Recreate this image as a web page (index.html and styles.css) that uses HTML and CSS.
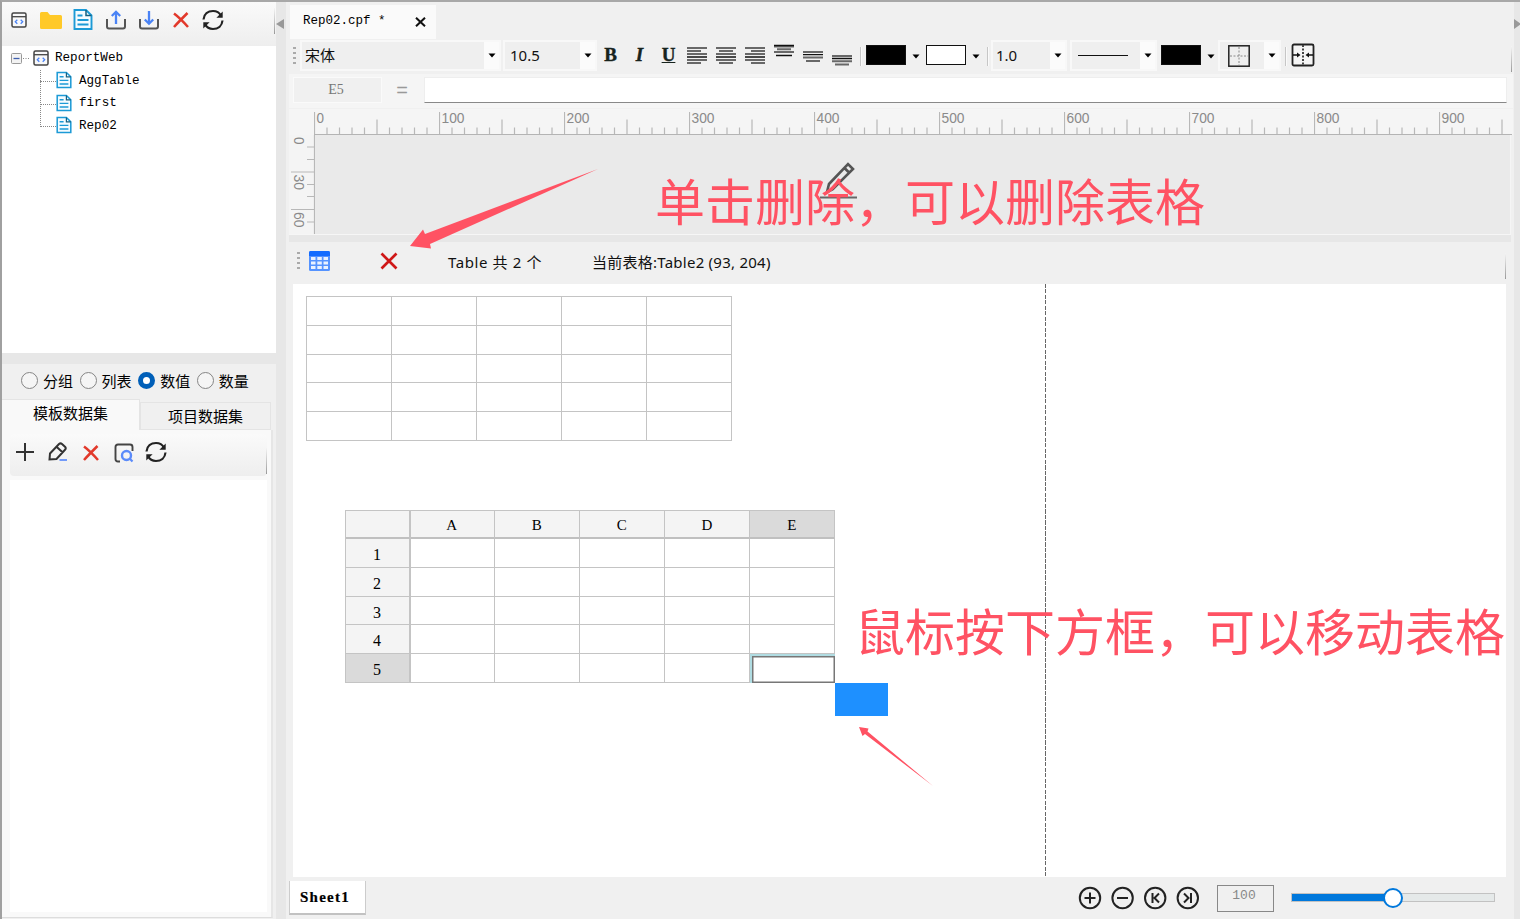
FILE: index.html
```html
<!DOCTYPE html>
<html lang="zh-CN">
<head>
<meta charset="utf-8">
<title>Report Designer</title>
<link rel="stylesheet" href="styles.css">
</head>
<body>
<svg class="defs" width="0" height="0">
  <defs>
    <symbol id="doc" viewBox="0 0 20 22"><path d="M1.5 1.5h11.5l5.5 5.500v13.500h-17z" fill="#f4fbff" stroke="#1c9ad6" stroke-width="1.900"/><path d="M13 1.500v5.500h5.500" fill="none" stroke="#17607f" stroke-width="1.500"/><path d="M4.500 7h5M4.500 11.500h11M4.500 16h11" stroke="#1c9ad6" stroke-width="1.800"/></symbol>
    <symbol id="web" viewBox="0 0 16 16"><rect x="1" y="1" width="14" height="14" rx="1.500" fill="#f8f8f8" stroke="#444" stroke-width="1.500"/><path d="M1 4.700h14" stroke="#444" stroke-width="1.300"/><path d="M6.300 7.700L4.300 9.700l2 2M9.700 7.700l2 2-2 2" fill="none" stroke="#4a83f5" stroke-width="1.300"/></symbol>
    <symbol id="cross" viewBox="0 0 18 18"><path d="M2 2.500C6 5.500 12 11.500 16 16M15.500 2C11.500 6 6 11.500 2 16" fill="none" stroke="#e2392b" stroke-width="2.500"/></symbol>
    <symbol id="refresh" viewBox="0 0 22 22"><path d="M1.500 10.500C2 5 6 2 11 2c3.500 0 6.500 1.800 8 4.700M20.500 11.500C20 17 16 20 11 20c-3.500 0-6.500-1.800-8-4.700" fill="none" stroke="#222" stroke-width="2.200"/><path d="M20.700 2.500v6.300h-6.300zM1.300 19.500v-6.300h6.300z" fill="#222"/></symbol>
    <symbol id="caret" viewBox="0 0 8 5"><path d="M.5 .5h7L4 4.500z" fill="#000"/></symbol>
    <pattern id="hticks" x="0" width="125" height="26" patternUnits="userSpaceOnUse"><path d="M.5 3v22.500M63 10.500v15M13 18.500v7M25.500 18.500v7M38 18.500v7M50.500 18.500v7M75.500 18.500v7M88 18.500v7M100.500 18.500v7M113 18.500v7" stroke="#b8b8b8" stroke-width="1.200"/></pattern>
  </defs>
</svg>
<div class="app">
  <aside class="sidebar">
    <div class="toolbar side-tools">
      <svg class="i-web" width="16" height="16"><use href="#web"/></svg>
      <svg class="i-folder" width="22" height="18" viewBox="0 0 22 18"><path d="M0 1.500Q0 0 1.500 0h6l2.500 3h10.500Q22 3 22 4.500v11q0 1.500-1.500 1.500h-19Q0 17 0 15.500z" fill="#ffc928"/></svg>
      <svg class="i-doc" width="20" height="23"><use href="#doc"/></svg>
      <svg class="i-up" width="20" height="20" viewBox="0 0 20 20"><path d="M1 9v7.500q0 2 2 2h14q2 0 2-2V9" fill="none" stroke="#555" stroke-width="2"/><path d="M10 14V2M5.800 6L10 1.800 14.200 6" fill="none" stroke="#4a83f5" stroke-width="2.300"/></svg>
      <svg class="i-down" width="20" height="20" viewBox="0 0 20 20"><path d="M1 9v7.500q0 2 2 2h14q2 0 2-2V9" fill="none" stroke="#555" stroke-width="2"/><path d="M10 1v12M5.800 9.500L10 13.700l4.200-4.200" fill="none" stroke="#4a83f5" stroke-width="2.300"/></svg>
      <svg class="i-x" width="18" height="18"><use href="#cross"/></svg>
      <svg class="i-ref" width="22" height="22"><use href="#refresh"/></svg>
      <span class="tool-end"></span>
    </div>
    <div class="tree">
      <div class="node root"><svg class="twig" width="20" height="12" viewBox="0 0 20 12"><rect x=".5" y=".5" width="10" height="10" rx="1" fill="#f3f3f3" stroke="#999"/><path d="M2.500 5.500h6" stroke="#3f5fae" stroke-width="1.300"/><path d="M12 5.500h7" stroke="#888" stroke-dasharray="1 1.500"/></svg><svg width="16" height="16"><use href="#web"/></svg><span>ReportWeb</span></div>
      <div class="children">
        <div class="node"><i></i><svg width="16" height="18"><use href="#doc"/></svg><span>AggTable</span></div>
        <div class="node"><i></i><svg width="16" height="18"><use href="#doc"/></svg><span>first</span></div>
        <div class="node"><i></i><svg width="16" height="18"><use href="#doc"/></svg><span>Rep02</span></div>
      </div>
    </div>
    <div class="hsplit"></div>
    <div class="radios">
      <label><b></b>分组</label><label><b></b>列表</label><label><b class="on"></b>数值</label><label><b></b>数量</label>
    </div>
    <div class="tabs"><div class="tab on">模板数据集</div><div class="tab">项目数据集</div></div>
    <div class="panel">
      <div class="panel-tools">
        <svg class="p-add" width="18" height="18" viewBox="0 0 18 18"><path d="M9 0v18M0 9h18" stroke="#333" stroke-width="2"/></svg>
        <svg class="p-edit" width="20" height="20" viewBox="0 0 20 20"><path d="M1.500 17.500l.5-6L11 2q1.500-1.300 3 0l3 2.800q1.500 1.500 0 3L8.500 17z M8.500 4.700l6 5.600" fill="none" stroke="#333" stroke-width="2"/><path d="M11.500 18h7.500" stroke="#6490fa" stroke-width="1.800"/></svg>
        <svg class="p-x" width="18" height="18"><use href="#cross"/></svg>
        <svg class="p-view" width="20" height="20" viewBox="0 0 20 20"><path d="M6 18.500H4q-2.500 0-2.500-2.500V4Q1.500 1.500 4 1.500h12q2.500 0 2.500 2.500v4" fill="none" stroke="#444" stroke-width="1.900"/><circle cx="12.500" cy="12.500" r="4.500" fill="none" stroke="#5b8bfa" stroke-width="2.400"/><path d="M15.800 15.800l2.700 2.700" stroke="#5b8bfa" stroke-width="2.200"/></svg>
        <svg class="p-ref" width="22" height="22"><use href="#refresh"/></svg>
        <span class="tool-end"></span>
      </div>
      <div class="panel-body"></div>
    </div>
  </aside>
  <div class="vsplit"><svg width="8" height="10" viewBox="0 0 8 10"><path d="M8 0v10L0 5z" fill="#999"/></svg></div>
  <main class="main">
    <div class="filetabs"><div class="filetab"><span>Rep02.cpf *</span><svg width="11" height="10" viewBox="0 0 11 10"><path d="M1 .7l9 8.600M10 .7L1 9.300" stroke="#111" stroke-width="2"/></svg></div></div>
    <div class="format">
      <span class="grip"></span>
      <div class="combo font"><span>宋体</span><em><svg width="8" height="5"><use href="#caret"/></svg></em></div>
      <div class="combo size"><span>10.5</span><em><svg width="8" height="5"><use href="#caret"/></svg></em></div>
      <span class="biu">B</span><span class="biu it">I</span><span class="biu un">U</span>
      <svg class="aligns" width="166" height="26" viewBox="0 0 166 26">
        <g stroke="#686868" stroke-width="2">
          <path d="M1 5h20M1 8h14M1 11h20M1 17h20M1 20h14M30 5h20M33 8h14M30 11h20M30 17h20M33 20h14M59 5h20M65 8h14M59 11h20M59 17h20M65 20h14"/>
          <path d="M88 3.500h20M91 6.200h14M88 9h20M117 9h20M117 14.500h20M120 18h14M146 13h20M146 18.200h20M149 21.500h14"/>
        </g>
        <path d="M1 14h20M30 14h20M59 14h20M88 2.500h20M90 12.500h16M117 11.700h20M146 15.500h20" stroke="#111" stroke-width="1.300"/>
      </svg>
      <span class="sep s1"></span>
      <span class="swatch"></span><svg class="drop" width="8" height="5"><use href="#caret"/></svg>
      <span class="swatch white"></span><svg class="drop" width="8" height="5"><use href="#caret"/></svg>
      <span class="sep s2"></span>
      <div class="combo thick"><span>1.0</span><em><svg width="8" height="5"><use href="#caret"/></svg></em></div>
      <div class="combo line"><span><u></u></span><em><svg width="8" height="5"><use href="#caret"/></svg></em></div>
      <span class="swatch third"></span><svg class="drop" width="8" height="5"><use href="#caret"/></svg>
      <div class="combo border"><span><svg width="22" height="22" viewBox="0 0 22 22"><rect x=".8" y=".8" width="20.400" height="20.400" fill="none" stroke="#222" stroke-width="1.500"/><path d="M11 2v18M2 11h18" stroke="#888" stroke-dasharray="2 1.500"/></svg></span><em><svg width="8" height="5"><use href="#caret"/></svg></em></div>
      <span class="sep s3"></span>
      <svg class="merge" width="24" height="24" viewBox="0 0 24 24"><rect x="1.500" y="1.500" width="21" height="21" rx="1.500" fill="#f5f5f5" stroke="#222" stroke-width="1.800"/><path d="M12 2v20" stroke="#444" stroke-width="2" stroke-dasharray="2 1.500"/><path d="M2 12h5M17 12h5" stroke="#111" stroke-width="1.700"/><path d="M6 9.500l3.500 2.500L6 14.500zM18 9.500L14.500 12l3.500 2.500z" fill="#111"/></svg>
      <span class="tool-end"></span>
    </div>
    <div class="formula"><div class="cellname">E5</div><span class="eq">=</span><div class="input"></div></div>
    <div class="hruler">
      <svg width="1198" height="26"><rect width="1198" height="26" fill="url(#hticks)"/><path d="M0 25.500h1198" stroke="#b4b4b4"/>
        <g class="num"><text x="2.500" y="13.500" textLength="7.500" lengthAdjust="spacingAndGlyphs">0</text><text x="127.500" y="13.500" textLength="23" lengthAdjust="spacingAndGlyphs">100</text><text x="252.500" y="13.500" textLength="23" lengthAdjust="spacingAndGlyphs">200</text><text x="377.500" y="13.500" textLength="23" lengthAdjust="spacingAndGlyphs">300</text><text x="502.500" y="13.500" textLength="23" lengthAdjust="spacingAndGlyphs">400</text><text x="627.500" y="13.500" textLength="23" lengthAdjust="spacingAndGlyphs">500</text><text x="752.500" y="13.500" textLength="23" lengthAdjust="spacingAndGlyphs">600</text><text x="877.500" y="13.500" textLength="23" lengthAdjust="spacingAndGlyphs">700</text><text x="1002.500" y="13.500" textLength="23" lengthAdjust="spacingAndGlyphs">800</text><text x="1127.500" y="13.500" textLength="23" lengthAdjust="spacingAndGlyphs">900</text></g>
      </svg>
    </div>
    <div class="header-zone">
      <svg class="vruler" width="26" height="99"><path d="M25.500 0v99M18 12h7M18 24.500h7M2 37h23M18 49.500h7M18 61.500h7M2 74.500h23M18 87h7" stroke="#b8b8b8" stroke-width="1.200" fill="none"/>
        <g class="num"><text transform="translate(5 2) rotate(90)" textLength="7.500" lengthAdjust="spacingAndGlyphs">0</text><text transform="translate(5 39.500) rotate(90)" textLength="15.500" lengthAdjust="spacingAndGlyphs">30</text><text transform="translate(5 77) rotate(90)" textLength="15.500" lengthAdjust="spacingAndGlyphs">60</text></g></svg>
      <div class="blank"></div>
    </div>
    <div class="msplit"></div>
    <div class="tabletools">
      <span class="grip"></span>
      <svg class="t-grid" width="21" height="20" viewBox="0 0 21 20"><rect width="21" height="20" rx="1.500" fill="#5593ff"/><path d="M0 1.500Q0 0 1.500 0h18Q21 0 21 1.500V5H0z" fill="#146cff"/><path d="M2 6h4.500v3H2zM8.300 6h4.500v3H8.300zM14.500 6H19v3h-4.500zM2 10.500h4.500v3H2zM8.300 10.500h4.500v3H8.300zM14.500 10.500H19v3h-4.500zM2 15h4.500v3H2zM8.300 15h4.500v3H8.300zM14.500 15H19v3h-4.500z" fill="#eaf2ff"/></svg>
      <svg class="t-x" width="18" height="18" viewBox="0 0 18 18"><path d="M1.500 1.500l15 15M16.500 1.500l-15 15" stroke="#cf1717" stroke-width="2.700"/></svg>
      <span class="count">Table 共 2 个</span><span class="current">当前表格:Table2 (93, 204)</span>
      <span class="tool-end"></span>
    </div>
    <div class="canvas">
      <div class="pageline"></div>
      <div class="grid plain">
        <i></i><i></i><i></i><i></i><i></i><i></i><i></i><i></i><i></i><i></i><i></i><i></i><i></i><i></i><i></i><i></i><i></i><i></i><i></i><i></i><i></i><i></i><i></i><i></i><i></i>
      </div>
      <div class="grid sheet">
        <b></b><b>A</b><b>B</b><b>C</b><b>D</b><b class="sel">E</b>
        <b>1</b><i></i><i></i><i></i><i></i><i></i>
        <b>2</b><i></i><i></i><i></i><i></i><i></i>
        <b>3</b><i></i><i></i><i></i><i></i><i></i>
        <b>4</b><i></i><i></i><i></i><i></i><i></i>
        <b class="sel">5</b><i></i><i></i><i></i><i></i><i class="active"></i>
      </div>
      <div class="handle"></div>
    </div>
    <div class="footer">
      <div class="sheettab">Sheet1</div>
      <div class="zoom">
        <svg width="122" height="24" viewBox="0 0 122 24" fill="none" stroke="#222" stroke-width="2"><circle cx="12" cy="12" r="10.200"/><path d="M12 6.500v11M6.500 12h11"/><circle cx="44.600" cy="12" r="10.200"/><path d="M39 12h11"/><circle cx="77.200" cy="12" r="10.200"/><path d="M74.500 7v10M81 7.500l-4.500 4.500 4.500 4.500"/><circle cx="109.800" cy="12" r="10.200"/><path d="M113 7v10M106 7.500l4.500 4.500-4.500 4.500"/></svg>
        <div class="percent">100</div>
        <div class="slider"><div class="fill"></div><div class="knob"></div></div>
      </div>
    </div>
  </main>
  <div class="rightsplit"><svg width="6" height="10" viewBox="0 0 6 10"><path d="M0 0v10l7-5z" fill="#999"/></svg></div>
  <svg class="pencil" width="40" height="40" viewBox="0 0 40 40"><path d="M8 31l2-8L29 3l5 5-20 20zM25.500 7l5 5M8 31l6-3" fill="none" stroke="#555" stroke-width="2.600"/><path d="M1 36.500h37" stroke="#666" stroke-width="2"/></svg>
  <div class="note n1">单击删除，可以删除表格</div>
  <div class="note n2">鼠标按下方框，可以移动表格</div>
  <svg class="arrow a1" width="190" height="82" viewBox="0 0 190 82"><path d="M0 78L13 61.500l2 4.500L188 1 20 76l1 4.500z" fill="#ff5263"/></svg>
  <svg class="arrow a2" width="75" height="61" viewBox="0 0 75 61"><path d="M0 0l9.500 1.500-1 3L74 59 6 7 3.500 9z" fill="#ff5263"/></svg>
</div>
</body>
</html>
```

FILE: styles.css
```css
* { box-sizing: border-box; }
body { margin: 0; font-family: "Noto Sans", "Noto Sans CJK SC", sans-serif; font-size: 15px; color: #111; overflow: hidden; }
svg { display: block; flex: none; }
i, b, em { font-style: normal; font-weight: normal; }
.defs { position: absolute; }
.app { position: relative; width: 1520px; height: 919px; display: flex; background: #f0f0f0; border-top: 2px solid #a8a8a8; border-left: 2px solid #a0a0a0; }
.tool-end { width: 1px; height: 26px; background: linear-gradient(#f4f4f4, #999); margin-left: auto; }

/* sidebar */
.sidebar { width: 274px; display: flex; flex-direction: column; flex: none; }
.side-tools { height: 44px; display: flex; align-items: flex-start; background: linear-gradient(#fafafa, #eee); padding: 0 1px 0 9px; }
.side-tools .i-web { margin-top: 10px; }
.side-tools .i-folder { margin: 10px 0 0 13px; }
.side-tools .i-doc { margin: 6px 0 0 11px; }
.side-tools .i-up { margin: 8px 0 0 13px; }
.side-tools .i-down { margin: 8px 0 0 13px; }
.side-tools .i-x { margin: 9px 0 0 13px; }
.side-tools .i-ref { margin: 7px 0 0 12px; }
.side-tools .tool-end { margin-top: 6px; }
.tree { height: 307px; background: #fff; padding: 1px 0 0 9px; font: 12.6px/22px "Liberation Mono", monospace; color: #000; }
.node { display: flex; align-items: center; height: 22.5px; }
.root span { margin-left: 6px; }
.root .twig { margin-right: 2px; margin-top: 2px; }
.root svg + svg { margin-top: -1px; }
.children { margin-left: 29px; position: relative; }
.children::before { content: ""; position: absolute; left: 0; top: 0; height: 57px; border-left: 1px dotted #888; }
.children i { width: 16px; border-top: 1px dotted #888; margin-top: 2px; }
.children svg { margin-top: -1px; }
.children span { margin-left: 7px; }
.hsplit { height: 11px; background: #e7e7e7; }
.radios { height: 35px; display: flex; align-items: center; padding: 0 0 2px 19px; gap: 7px; }
.radios label { display: flex; align-items: center; height: 20px; width: 51.600px; white-space: nowrap; gap: 5px; color: #000; }
.radios b { width: 17px; height: 17px; border: 1.500px solid #858585; border-radius: 50%; background: #f5f5f5; flex: none; }
.radios .on { background: #fff; border: 5px solid #005fb8; }
.tabs { height: 31px; display: flex; align-items: flex-end; color: #000; }
.tab { height: 28px; width: 131px; border: 1px solid #e4e4e4; text-align: center; line-height: 27px; }
.tab.on { height: 31px; width: 138px; background: #f9f9f9; border-bottom: 0; border-left: 0; line-height: 27px; }
.panel { width: 271px; height: 488px; background: #f9f9f9; border-right: 2px solid #e6e6e6; border-bottom: 1px solid #ddd; padding: 4px 4px 6px 8px; }
.panel-tools { height: 42px; display: flex; align-items: flex-start; background: linear-gradient(#fafafa, #eee); border-radius: 4px; padding-left: 6px; }
.p-add { margin-top: 9px; }
.p-edit { margin: 8px 0 0 14px; }
.p-x { margin: 10px 0 0 14px; }
.p-view { margin: 9px 0 0 14px; }
.p-ref { margin: 7px 0 0 11px; }
.panel-tools .tool-end { margin-top: 14px; }
.panel-body { height: 432px; background: #fff; margin-top: 4px; }
.vsplit { width: 10px; background: #e7e7e7; flex: none; padding-top: 17px; }

/* editor */
.main { width: 1227px; flex: none; padding-left: 3px; display: flex; flex-direction: column; }
.filetabs { height: 37px; padding: 3px 0 0 1px; }
.filetab { width: 146px; height: 34px; background: #fafafa; display: flex; align-items: center; padding-left: 13px; font: 12.5px "Liberation Mono", monospace; color: #000; }
.filetab span { line-height: 32px; height: 34px; width: 112px; }
.format { height: 34px; display: flex; align-items: center; padding-left: 4px; }
.grip { width: 3px; height: 18px; background: repeating-linear-gradient(#aaa 0 2px, transparent 2px 5px); }
.combo { height: 31px; border: 2px solid #f8f8f8; display: flex; background: #efefef; line-height: 27px; margin-bottom: 1px; }
.combo span { flex: 1; padding-left: 3px; }
.combo em { width: 15px; background: #fbfbfb; display: flex; align-items: center; justify-content: center; }
.combo.font { width: 201px; margin-left: 4px; }
.combo.size { width: 94px; margin-left: 2px; }
.combo.size span { padding-left: 5px; line-height: 26px; }
.biu { width: 29px; margin: 0 0 2px; text-align: center; font: bold 19px/22px "Liberation Serif", serif; color: #17231d; -webkit-text-stroke: .4px #17231d; position: relative; left: -1px; }
.it { font-style: italic; }
.un { text-decoration: underline; }
.aligns { margin-left: 2px; margin-bottom: 1px; }
.sep { width: 2px; height: 19px; background: #c6c6c6; border-right: 1px solid #fafafa; }
.s1 { margin: 0 4px 0 8px; }
.swatch { width: 40px; height: 20px; background: #000; border: 1.500px solid #111; margin-bottom: 2px; }
.swatch.white { background: #fff; }
.drop { margin: 0 6px 0 6px; }
.s2 { margin: 0 2px 0 1px; }
.combo.thick { width: 76px; }
.combo.line { width: 87px; margin-left: 3px; }
.combo.line span { padding: 13px 0 0 6px; }
.combo u { display: block; width: 50px; border-top: 1px solid #111; }
.third { margin-left: 4px; }
.combo.border { width: 63px; margin-left: -3px; }
.combo.border span { padding: 3px 0 0 8px; }
.s3 { margin: 0 4px; }
.merge { margin-bottom: 2px; }
.format .tool-end { margin-right: 1px; margin-top: 6px; }
.formula { height: 34px; margin-top: 1px; padding: 3px 6px 0 4px; background: #f5f5f5; display: flex; align-items: flex-start; }
.cellname { width: 89px; height: 26px; border: 1px solid #fafafa; background: #f0f0f0; text-align: center; font: 14px/24px "Liberation Serif", serif; color: #777; padding-right: 3px; }
.eq { width: 40px; text-align: center; font: 20px/27px "Liberation Sans", sans-serif; color: #999; margin-right: 2px; }
.input { flex: 1; height: 26px; background: #fff; border: 1px solid #eee; border-bottom: 1px solid #888; }
.hruler { height: 26px; flex: none; margin-top: 1px; background: #f5f5f5; padding-left: 25px; }
.num { font: 15.500px "Liberation Sans", sans-serif; fill: #8a8a8a; }
.header-zone { height: 99px; display: flex; flex: none; }
.vruler { background: #f4f4f4; }
.blank { width: 1196px; background: #eaeaea; border-right: 1px solid #f5f5f5; }
.msplit { height: 8px; width: 1222px; border-top: 1px solid #f6f6f6; background: #e7e7e7; flex: none; }
.tabletools { height: 42px; flex: none; display: flex; align-items: center; padding: 0 7px 4px 8px; }
.t-grid { margin: 0 50px 0 9px; }
.count { width: 144px; margin-left: 50px; letter-spacing: .6px; }
.current { letter-spacing: .25px; }
.tabletools .tool-end { margin-top: 10px; }
.canvas { position: relative; width: 1213px; height: 593px; background: #fff; margin-left: 4px; flex: none; }
.pageline { position: absolute; left: 752px; top: 0; height: 593px; width: 1px; background: repeating-linear-gradient(#666 0 4px, #fff 4px 5.500px); }
.grid { position: absolute; display: grid; border-top: 1px solid #c4c4c4; border-left: 1px solid #c4c4c4; }
.grid > * { border-right: 1px solid #c4c4c4; border-bottom: 1px solid #c4c4c4; }
.plain { left: 13px; top: 12px; grid-template: repeat(5, 28.800px) / repeat(5, 85.100px); }
.sheet { left: 52px; top: 226px; grid-template: 28px repeat(5, 28.800px) / 64px repeat(5, 85.100px); font: 15px/28px "Liberation Serif", serif; text-align: center; color: #000; }
.sheet b { background: #f4f4f4; padding-right: 1px; }
.sheet b:nth-child(-n+6) { border-bottom: 2px solid #c0c0c0; }
.sheet b:nth-child(6n+1) { box-shadow: 1px 0 #c4c4c4; z-index: 1; font-size: 16px; line-height: 31px; }
.sheet b.sel { background: #dadada; }
.sheet .active { border: 0; border-left: 2px solid #b0dce2; border-top: 2px solid #b0dce2; box-shadow: inset 0 0 0 1.500px #777; }
.handle { position: absolute; left: 542px; top: 399px; width: 53px; height: 33px; background: #1e90ff; }
.footer { flex: none; height: 42px; display: flex; align-items: flex-start; justify-content: space-between; padding-right: 18px; }
.sheettab { width: 77px; height: 34px; margin-top: 4px; background: #fff; border: 1px solid #ccc; border-top: 0; border-bottom: 2px solid #c2c2c2; font: bold 15px/32px "Liberation Serif", serif; letter-spacing: 1.250px; color: #000; padding-left: 10px; -webkit-text-stroke: .2px #000; }
.zoom { display: flex; align-items: flex-start; }
.zoom > svg { margin-top: 9px; }
.percent { width: 57px; height: 27px; margin: 8px 17px 0; border: 1.500px solid #888; text-align: center; font: 13px/20px "Liberation Mono", monospace; color: #888; padding-right: 3px; }
.slider { position: relative; width: 204px; height: 9px; margin-top: 16px; border: 1px solid #c2c2c2; background: #e5e9e9; }
.fill { width: 102px; height: 7px; background: #0078dc; }
.knob { position: absolute; left: 91px; top: -6px; width: 20px; height: 20px; border: 2px solid #0078dc; border-radius: 50%; background: #fff; }
.rightsplit { flex: 1; background: #e7e7e7; padding-top: 17px; overflow: hidden; margin-left: 1px; }

/* annotations laid over the editor */
.pencil { position: absolute; left: 817px; top: 159px; }
.note { position: absolute; font: 400 50px/60px "Noto Sans CJK SC", sans-serif; color: #ff5263; white-space: nowrap; }
.n1 { left: 653px; top: 167px; }
.n2 { left: 853px; top: 597px; }
.arrow { position: absolute; }
.a1 { left: 408px; top: 166px; }
.a2 { left: 857px; top: 725px; }
```
